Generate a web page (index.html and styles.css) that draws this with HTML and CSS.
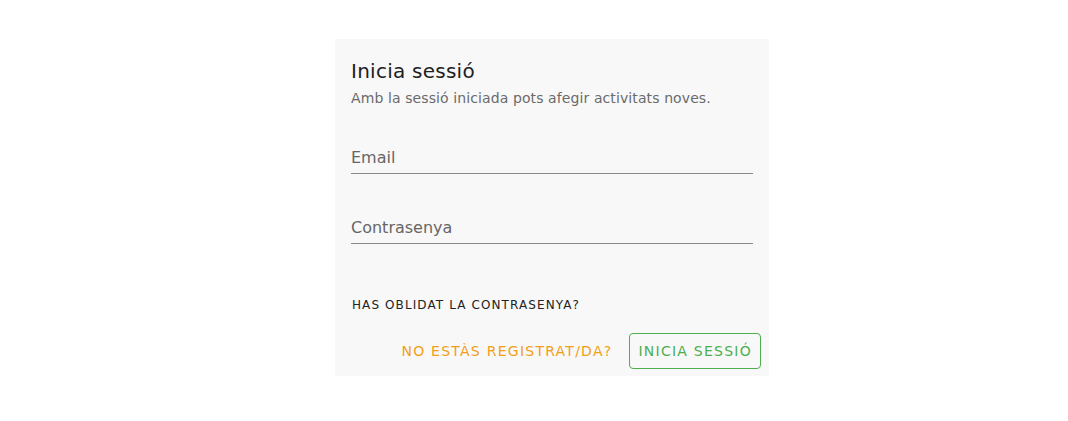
FILE: index.html
```html
<!DOCTYPE html>
<html lang="ca">
<head>
<meta charset="utf-8">
<title>Inicia sessió</title>
<link rel="stylesheet" href="styles.css">
</head>
<body>
<div class="page">
  <div class="card">
    <div class="card-head">
      <div class="title">Inicia sessió</div>
      <div class="subtitle">Amb la sessió iniciada pots afegir activitats noves.</div>
    </div>
    <form class="card-body">
      <div class="field"><span class="label">Email</span></div>
      <div class="field"><span class="label">Contrasenya</span></div>
      <div class="forgot">Has oblidat la contrasenya?</div>
    </form>
    <div class="actions">
      <button class="btn btn-text" type="button">No estàs registrat/da?</button>
      <button class="btn btn-outline" type="button">Inicia sessió</button>
    </div>
  </div>
</div>
</body>
</html>
```
FILE: styles.css
```css
html, body {
  margin: 0;
  padding: 0;
  background: #ffffff;
  font-family: "DejaVu Sans", sans-serif;
}
.page {
  display: flex;
  justify-content: center;
  padding-top: 39px;
  padding-left: 36px;
}
.card {
  width: 434px;
  background: #f8f8f8;
  display: flex;
  flex-direction: column;
}
.card-head {
  padding: 16px 16px 0;
}
.title {
  font-size: 20px;
  line-height: 32px;
  letter-spacing: 0.25px;
  color: #212121;
}
.subtitle {
  font-size: 14px;
  line-height: 20px;
  letter-spacing: 0.1px;
  color: #6b6b6b;
  margin-top: 1px;
}
.card-body {
  padding: 0 16px;
  display: flex;
  flex-direction: column;
}
.field {
  margin-top: 35px;
  height: 34px;
  border-bottom: 1px solid #8a8a8a;
  display: flex;
  align-items: flex-end;
}
.field:first-child {
  margin-top: 31px;
}
.label {
  font-size: 16px;
  line-height: 19px;
  color: #666666;
  padding-bottom: 6px;
}
.forgot {
  margin-top: 46px;
  padding-left: 1px;
  font-size: 12px;
  line-height: 30px;
  letter-spacing: 1.1px;
  text-transform: uppercase;
  color: #222222;
}
.actions {
  display: flex;
  justify-content: flex-end;
  align-items: center;
  gap: 8px;
  padding: 13px 8px 7px;
}
.btn {
  font-family: "DejaVu Sans", sans-serif;
  font-size: 14px;
  letter-spacing: 1.25px;
  text-transform: uppercase;
  height: 36px;
  padding: 0 8px;
  border-radius: 4px;
  background: transparent;
  cursor: pointer;
}
.btn-text {
  border: 1px solid transparent;
  color: #f29f17;
}
.btn-outline {
  border: 1px solid #4caf50;
  color: #4caf50;
}
```
